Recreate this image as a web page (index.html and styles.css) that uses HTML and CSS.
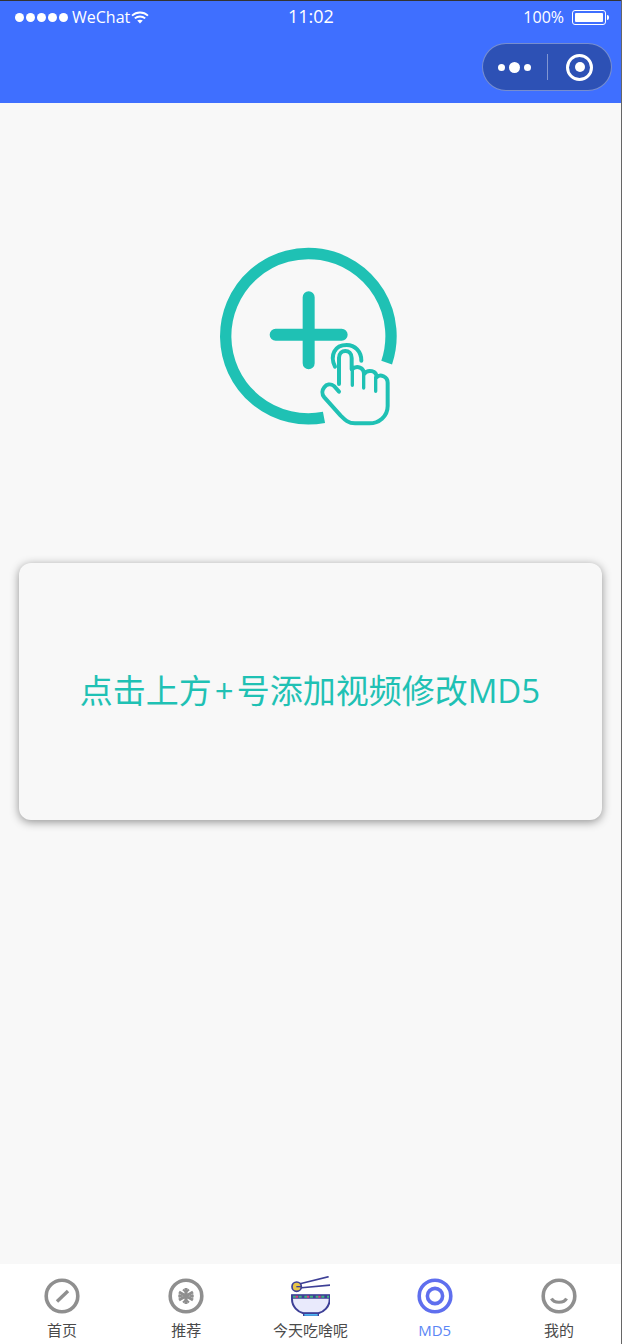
FILE: index.html
```html
<!DOCTYPE html>
<html lang="zh-CN">
<head>
<meta charset="utf-8">
<title>MD5</title>
<link rel="stylesheet" href="styles.css">
</head>
<body>
<div class="page">
  <header class="header">
    <div class="status">
      <div class="status-left">
        <span class="signal"><i></i><i></i><i></i><i></i><i></i></span>
        <span class="carrier">WeChat</span>
        <svg class="wifi" viewBox="0 0 18 13" width="18" height="13">
          <path d="M1 4.6C5.6 0.4 12.4 0.4 17 4.6" fill="none" stroke="#fff" stroke-width="1.9"/>
          <path d="M3.8 7.4C6.8 4.8 11.2 4.8 14.2 7.4" fill="none" stroke="#fff" stroke-width="1.9"/>
          <path d="M6.2 9.6C8 8.4 10 8.4 11.8 9.6L9 12.6Z" fill="#fff"/>
        </svg>
      </div>
      <span class="time">11:02</span>
      <div class="status-right">
        <span class="percent">100%</span>
        <span class="battery"><b></b></span>
        <span class="battery-tip"></span>
      </div>
    </div>
    <div class="nav">
      <div class="capsule">
        <span class="dots"><i></i><i class="big"></i><i></i></span>
        <span class="divider"></span>
        <span class="target"><i></i></span>
      </div>
    </div>
  </header>

  <main class="main">
    <svg class="add-icon" viewBox="0 0 600 585" width="200" height="195">
      <path d="M342 532A248 248 0 1 1 530 368" fill="none" stroke="#1fc1b4" stroke-width="34"/>
      <path d="M296 172V370M197 284H395" fill="none" stroke="#1fc1b4" stroke-width="36" stroke-linecap="round"/>
      <g fill="none" stroke="#1fc1b4" stroke-linecap="round" stroke-linejoin="round">
        <path d="M375 380C358 345 375 315 410 315C435 315 454 335 454 362" stroke-width="12"/>
        <path d="M387 432V354C387 326 425 326 425 354V388C442 374 462 384 462 402C474 386 500 392 500 412C510 400 533 410 533 428V498C533 530 506 550 478 550H435C415 550 405 540 392 527L343 472C326 452 350 422 372 438L387 455" stroke-width="12"/>
        <path d="M427 388V436M461 402V444M497 412V454" stroke-width="10"/>
      </g>
    </svg>
    <section class="card">
      <p class="hint">点击上方<span class="plus">+</span>号添加视频修改MD5</p>
    </section>
  </main>

  <nav class="tabbar">
    <div class="tab">
      <svg class="tab-icon" viewBox="0 0 40 40">
        <circle cx="20" cy="20" r="15.8" fill="none" stroke="#8f8f8f" stroke-width="3.6"/>
        <path d="M15 25.5L26 15" stroke="#8f8f8f" stroke-width="3.4"/>
      </svg>
      <span class="tab-label">首页</span>
    </div>
    <div class="tab">
      <svg class="tab-icon" viewBox="0 0 40 40">
        <circle cx="20" cy="20" r="15.8" fill="none" stroke="#8f8f8f" stroke-width="3.6"/>
        <path d="M20 12V28M13 16L27 24M13 24L27 16" stroke="#8f8f8f" stroke-width="3"/>
        <path d="M17 13.5L20 16L23 13.5M17 26.5L20 24L23 26.5M12.5 19L15 20L12.5 21M27.5 19L25 20L27.5 21" fill="none" stroke="#8f8f8f" stroke-width="2.2"/>
      </svg>
      <span class="tab-label">推荐</span>
    </div>
    <div class="tab">
      <svg class="tab-icon" viewBox="61 18 120 120">
        <path d="M88 42L177 20M88 54L183 45" stroke="#3d3f96" stroke-width="5" fill="none"/>
        <circle cx="81" cy="50" r="14" fill="#e8c547" stroke="#3d3f96" stroke-width="5"/>
        <path d="M80 50H94" stroke="#3d3f96" stroke-width="4"/>
        <path d="M67 76H180V88C180 110 162 126 146 130H101C85 126 67 110 67 88Z" fill="#e9eafc" stroke="#3d3f96" stroke-width="6"/>
        <path d="M67 80H180" stroke="#3d3f96" stroke-width="12"/>
        <path d="M70 80H178" stroke="#3fb37f" stroke-width="6" stroke-dasharray="9 8"/>
        <path d="M78 80H178" stroke="#d6457a" stroke-width="6" stroke-dasharray="7 27"/>
        <path d="M102 130H146V139H102Z" fill="#4eb6f2" stroke="#3d3f96" stroke-width="4"/>
      </svg>
      <span class="tab-label">今天吃啥呢</span>
    </div>
    <div class="tab tab-active">
      <svg class="tab-icon" viewBox="0 0 40 40">
        <circle cx="20" cy="20" r="15.8" fill="none" stroke="#5f6fee" stroke-width="3.6"/>
        <circle cx="20" cy="20" r="7.6" fill="none" stroke="#5f6fee" stroke-width="3.6"/>
      </svg>
      <span class="tab-label">MD5</span>
    </div>
    <div class="tab">
      <svg class="tab-icon" viewBox="0 0 40 40">
        <circle cx="20" cy="20" r="15.8" fill="none" stroke="#8f8f8f" stroke-width="3.6"/>
        <path d="M12.5 22.5C15 27.5 25 27.5 27.5 22.5" fill="none" stroke="#8f8f8f" stroke-width="3.2"/>
      </svg>
      <span class="tab-label">我的</span>
    </div>
  </nav>
</div>
</body>
</html>
```

FILE: styles.css
```css
* {
  box-sizing: border-box;
}

html,
body {
  margin: 0;
  height: 100%;
}

body {
  font-family: "Open Sans", "Noto Sans CJK SC", sans-serif;
  background: #f8f8f8;
}

.page {
  display: flex;
  flex-direction: column;
  height: 100vh;
  border-right: 1px solid #666;
  overflow: hidden;
}

/* Top bar: system status row plus the capsule row */
.header {
  flex: none;
  height: 103px;
  background: #3f6fff;
  border-top: 1px solid #333;
  color: #fff;
}

.status {
  position: relative;
  display: flex;
  justify-content: space-between;
  align-items: center;
  height: 32px;
  padding: 0 12px 0 15px;
}

.status-left,
.status-right {
  display: flex;
  align-items: center;
}

.signal {
  display: flex;
  gap: 2px;
}

.signal i {
  width: 9px;
  height: 9px;
  border-radius: 50%;
  background: #fff;
}

.carrier {
  margin-left: 4px;
  font-size: 16px;
  line-height: 24px;
}

.wifi {
  margin-left: 1px;
}

.time {
  position: absolute;
  left: 288px;
  top: 2px;
  font-size: 18px;
  line-height: 26px;
}

.percent {
  font-size: 16px;
  line-height: 24px;
  margin-right: 8px;
}

.battery {
  display: block;
  width: 34px;
  height: 15px;
  padding: 2px;
  border: 1px solid #fff;
  border-radius: 3px;
}

.battery b {
  display: block;
  height: 100%;
  background: #fff;
  border-radius: 1px;
}

.battery-tip {
  width: 2px;
  height: 5px;
  margin-left: 1px;
  background: #fff;
  border-radius: 0 2px 2px 0;
}

.nav {
  display: flex;
  justify-content: flex-end;
  padding: 10px 9px 0 0;
}

.capsule {
  display: flex;
  align-items: center;
  width: 130px;
  height: 48px;
  padding-left: 15px;
  background: #2d51b5;
  border: 1px solid rgba(255, 255, 255, 0.35);
  border-radius: 24px;
}

.dots {
  display: flex;
  align-items: center;
  gap: 4px;
}

.dots i {
  width: 7px;
  height: 7px;
  border-radius: 50%;
  background: #fff;
}

.dots .big {
  width: 11px;
  height: 11px;
}

.divider {
  width: 1px;
  height: 26px;
  margin-left: 16px;
  background: rgba(255, 255, 255, 0.4);
}

.target {
  display: flex;
  align-items: center;
  justify-content: center;
  width: 27px;
  height: 27px;
  margin-left: 18px;
  border: 3px solid #fff;
  border-radius: 50%;
}

.target i {
  width: 10px;
  height: 10px;
  border-radius: 50%;
  background: #fff;
}

.main {
  flex: 1;
  display: flex;
  flex-direction: column;
  align-items: center;
  padding-top: 137px;
}

.add-icon {
  display: block;
  margin-left: -2px;
}

.card {
  display: flex;
  align-items: center;
  justify-content: center;
  width: 583px;
  height: 257px;
  margin-top: 128px;
  margin-left: -1px;
  padding-bottom: 2px;
  background: #f8f8f8;
  border-radius: 12px;
  box-shadow: 0 2px 10px rgba(0, 0, 0, 0.42);
}

.hint {
  margin: 0;
  font-size: 33px;
  line-height: 44px;
  color: #1fc1b4;
}

.plus {
  margin: 0 3px;
}

/* Bottom tabs */
.tabbar {
  flex: none;
  display: grid;
  grid-template-columns: repeat(5, 1fr);
  height: 80px;
  background: #fff;
}

.tab {
  display: flex;
  flex-direction: column;
  align-items: center;
  padding-top: 12px;
}

.tab-icon {
  display: block;
  width: 40px;
  height: 40px;
}

.tab-label {
  margin-top: 4px;
  font-size: 15px;
  line-height: 20px;
  color: #4a4a4a;
}

.tab-active .tab-label {
  color: #5b86f5;
}
```
